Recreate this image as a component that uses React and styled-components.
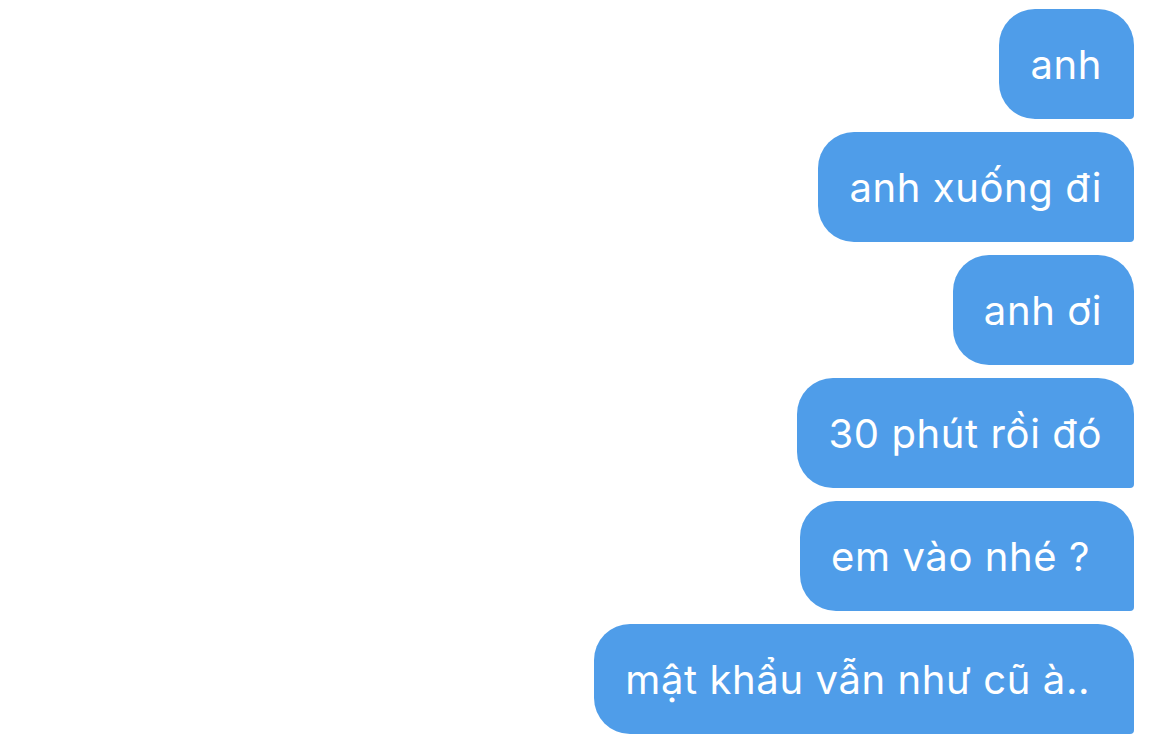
import React from "react";
import styled, { createGlobalStyle } from "styled-components";

const Global = createGlobalStyle`
  html, body { margin: 0; padding: 0; background: #ffffff; }
  body { font-family: Inter, "Noto Sans", sans-serif; }
`;

const Thread = styled.div`
  width: 1170px;
  height: 748px;
  box-sizing: border-box;
  padding: 9px 36px 0 0;
  display: flex;
  flex-direction: column;
  align-items: flex-end;
  gap: 13px;
  overflow: hidden;
`;

const Bubble = styled.div`
  box-sizing: border-box;
  height: 110px;
  padding: 0 32px 0 31px;
  display: flex;
  align-items: center;
  background: #4f9de9;
  color: #ffffff;
  font-family: Inter, "Noto Sans", sans-serif;
  font-size: 40px;
  font-weight: 400;
  letter-spacing: 0.6px;
  white-space: pre;
  border-radius: 36px 36px 4px 36px;
`;

const messages = [
  "anh",
  "anh xuống đi",
  "anh ơi",
  "30 phút rồi đó",
  "em vào nhé ? ",
  "mật khẩu vẫn như cũ à.. ",
];

export default function App() {
  return (
    <>
      <Global />
      <Thread>
        {messages.map((m, i) => (
          <Bubble key={i}>{m}</Bubble>
        ))}
      </Thread>
    </>
  );
}
